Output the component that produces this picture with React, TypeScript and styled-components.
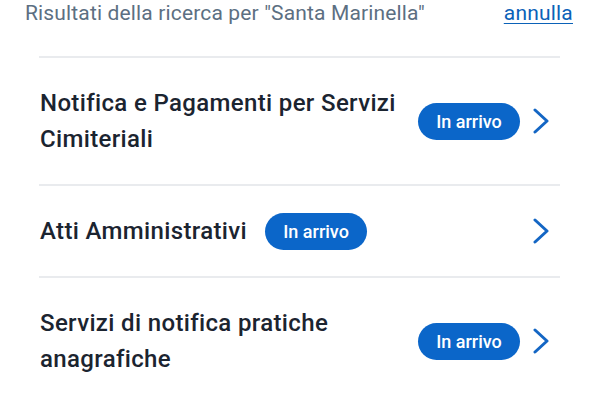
import React from "react";
import styled, { createGlobalStyle } from "styled-components";

const Global = createGlobalStyle`
  html, body { margin: 0; padding: 0; background: #ffffff; }
  body { font-family: Roboto, "Noto Sans", Arial, sans-serif; -webkit-font-smoothing: antialiased; }
`;

const Page = styled.div`
  width: 600px;
  height: 400px;
  overflow: hidden;
  background: #fff;
`;

const Header = styled.div`
  display: flex;
  align-items: flex-start;
  justify-content: space-between;
  padding: 0 27px 0 25px;
  height: 56px;
  font-size: 21px;
  line-height: 26px;
`;

const Query = styled.span`
  color: #5c6f82;
  letter-spacing: 0.15px;
`;

const Cancel = styled.a`
  color: #0b62b8;
  letter-spacing: 0.2px;
  text-decoration: underline;
  text-underline-offset: 3px;
  text-decoration-thickness: 1px;
`;

const List = styled.ul`
  list-style: none;
  margin: 0 40px 0 39px;
  padding: 0;
  border-top: 2px solid #e9ebee;
`;

const Row = styled.li`
  display: flex;
  align-items: center;
  padding: 27px 0 27px 1px;
  border-bottom: 2px solid #e9ebee;
`;

const Title = styled.span`
  flex: 0 1 auto;
  color: #1b2430;
  font-size: 24px;
  font-weight: 500;
  line-height: 36px;
  letter-spacing: 0.35px;
`;

const Badge = styled.span`
  flex: 0 0 auto;
  display: inline-flex;
  align-items: center;
  justify-content: center;
  box-sizing: border-box;
  width: 102px;
  height: 37px;
  margin: -1px 0 -1px 18px;
  border-radius: 19px;
  background: #0b66c9;
  color: #fff;
  font-size: 18px;
  font-weight: 500;
`;

const Chevron = styled.svg`
  flex: 0 0 auto;
  margin-left: auto;
  padding-left: 13px;
  margin-right: 11px;
  width: 16px;
  height: 26px;
`;

const Arrow = () => (
  <Chevron viewBox="0 0 16 26" fill="none">
    <path d="M2 2 L14 13 L2 24" stroke="#1466c4" strokeWidth="3" strokeLinecap="round" strokeLinejoin="round" />
  </Chevron>
);

const items = [
  "Notifica e Pagamenti per Servizi Cimiteriali",
  "Atti Amministrativi",
  "Servizi di notifica pratiche anagrafiche",
];

export default function App() {
  return (
    <Page>
      <Global />
      <Header>
        <Query>Risultati della ricerca per "Santa Marinella"</Query>
        <Cancel href="#">annulla</Cancel>
      </Header>
      <List>
        {items.map((t) => (
          <Row key={t}>
            <Title>{t}</Title>
            <Badge>In arrivo</Badge>
            <Arrow />
          </Row>
        ))}
      </List>
    </Page>
  );
}
